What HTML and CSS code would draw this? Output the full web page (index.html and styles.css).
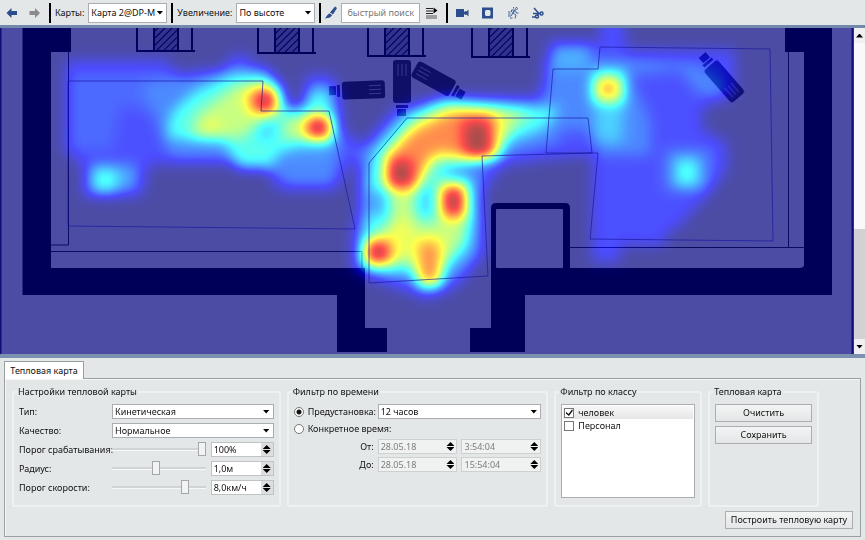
FILE: index.html
```html
<!DOCTYPE html>
<html lang="ru">
<head>
<meta charset="utf-8">
<title>Тепловая карта</title>
<link rel="stylesheet" href="styles.css">
</head>
<body>
<header class="toolbar">
  <button class="tool" type="button" aria-label="Назад"><svg width="12" height="12" viewBox="0 0 12 12"><path fill="#2d4e8c" d="M.5 6 5.500 1v3H11v4H5.500v3z"/></svg></button>
  <button class="tool tool-next" type="button" aria-label="Вперёд"><svg width="12" height="12" viewBox="0 0 12 12"><path fill="#8b8b8b" d="M11 6 6 1v3H.5v4H6v3z"/></svg></button>
  <span class="sep sep-first"></span>
  <label for="map">Карты:</label>
  <span class="combo combo-bar"><select id="map"><option>Карта 2@DP-M</option></select></span>
  <span class="sep"></span>
  <label for="scale">Увеличение:</label>
  <span class="combo combo-bar"><select id="scale"><option>По высоте</option></select></span>
  <span class="sep"></span>
  <button class="tool" type="button" aria-label="Правка"><svg width="12" height="13" viewBox="0 0 12 13"><path fill="#2d4e8c" d="M10 .5 12 2 8 8.500 5 6.500zM4.500 7.200 7.200 9.200 5 11.500 0 12.500 2 9.500z"/></svg></button>
  <input class="search" type="text" placeholder="быстрый поиск" aria-label="быстрый поиск">
  <button class="tool tool-list" type="button" aria-label="Список"><svg width="12" height="12" viewBox="0 0 12 12"><path stroke="#222" d="M0 1.500h7M0 4h7M0 6.500h7"/><path stroke="#555" d="M0 9h11M0 11h11"/><path d="M7.500 .5l4 3-4 3z"/></svg></button>
  <span class="sep"></span>
  <div class="icons">
    <button class="tool" type="button" aria-label="Камера"><svg width="13" height="12" viewBox="0 0 13 12"><path fill="#2d4e8c" d="M0 2h8v3l1.500-1 1 .5 2-2v7l-2-2-1 .5L8 7v3H0z"/></svg></button>
    <button class="tool" type="button" aria-label="Область"><svg width="12" height="12" viewBox="0 0 12 12"><path fill="#2d4e8c" fill-rule="evenodd" d="M0 .5h11v11H0zM4 3 3 4v4l1 1h3.500l1-1V4l-1-1z"/></svg></button>
    <button class="tool" type="button" aria-label="Движение"><svg width="12" height="12" viewBox="0 0 12 12"><g fill="none" stroke="#4565a0"><path d="M4.500 3h4L6 6l3 2-1 3.500M4.500 3v2M6 6 4 9H1M8.500 4l1 2h2M1 5h2.500M1 7h2.500M6.500 1.500V0M3 11h2.500M7 3.500 5 7"/><circle cx="9.500" cy="1.500" r="1"/></g></svg></button>
    <button class="tool" type="button" aria-label="Связи"><svg width="12" height="12" viewBox="0 0 12 12"><g fill="none" stroke="#2d4e8c" stroke-width="1.500"><path d="M2 1l4.500 5M1 6.500h7M5.500 8.500l1-3M0 10h4"/><circle cx="9.500" cy="6.500" r="1.500"/><circle cx="5" cy="9.500" r="1.500"/></g></svg></button>
  </div>
</header>

<main class="viewer">
  <svg class="plan" viewBox="0 28 854 326" preserveAspectRatio="none" role="img" aria-label="План помещения с тепловой картой">
    <defs>
      <pattern id="hatch" width="5" height="5" patternUnits="userSpaceOnUse" patternTransform="rotate(45)">
        <rect width="5" height="5" fill="#a4a4b4"/><path d="M0 0v5" stroke="#000" stroke-width="2"/>
      </pattern>
      <filter id="jet" filterUnits="userSpaceOnUse" x="-40" y="-12" width="934" height="406" color-interpolation-filters="sRGB">
        <feGaussianBlur stdDeviation="7"/>
        <feComponentTransfer>
          <feFuncR type="table" tableValues="0 0 0 0 .5 1 1 1 .5"/>
          <feFuncG type="table" tableValues="0 0 .5 1 1 1 .5 0 0"/>
          <feFuncB type="table" tableValues=".5 1 1 1 .5 0 0 0 0"/>
        </feComponentTransfer>
      </filter>
      <g id="window">
        <path fill="none" stroke="#000" stroke-width="2" d="M1 0v23h58M56 0v24"/>
        <path fill="url(#hatch)" stroke="#000" stroke-width="2" d="M18 -8h24v31H18z"/>
      </g>
      <g id="camera">
        <rect x="-21" y="-9" width="43" height="18" rx="3"/>
        <path d="M-26 -6h3V6h-3zM-34 -5h7v9h-7z"/>
        <path stroke="#aaa" d="M6 -4h12M6 0h12M6 4h12"/>
      </g>
    </defs>
    <rect y="28" width="854" height="326" fill="#fff"/>
    <path d="M22.500 28H71v24H51v216h314v60h22v24h-50v-57H22.500zM785 28h47v267H525v57h-55v-24h21V208q0-5 5-5h69q5 0 5 5v60h229q5 0 5-3V52h-19z"/>
    <rect x="496" y="209" width="67" height="59" rx="1" fill="#fff"/>
    <path fill="none" stroke="#222" d="M68.500 52v193H51M51 251.500h311v17M788.500 52v195M569 247.500h235"/>
    <path fill="none" stroke="#336" d="M.5 28v326M852.500 28v326" stroke-width="2"/>
    <use href="#window" x="136" y="28"/>
    <use href="#window" x="257" y="30"/>
    <use href="#window" x="367" y="33"/>
    <use href="#window" x="471" y="34"/>
    <path stroke="#000" stroke-width="2" d="M368 28v8M423 28v8M472 28v8M527 28v8M313 28v4M258 28v4"/>
    <g opacity=".8">
      <use href="#camera" transform="translate(363 90) rotate(-2)"/>
      <use href="#camera" transform="translate(402 82) rotate(-90)"/>
      <use href="#camera" transform="translate(434 79) rotate(209)"/>
      <use href="#camera" transform="translate(724 81) rotate(49)"/>
    </g>
    <g opacity=".7">
      <g filter="url(#jet)">
        <rect x="-60" y="-30" width="980" height="450" fill="#000"/>
        <path fill="#222" d="M66 60H165L185 80H220L230 55H248L262 76 284 82 290 108H302L306 75H330L340 90L343 130L365 145L395 108L450 96H535L545 80 550 42H600V18H622L628 50H735V95L702 108V130L727 142V170L708 195L680 225L665 235V245H620V262H592V155L545 159L505 165L484 190V255L455 288L428 300L385 284L352 268V235L362 200L358 160L350 165 336 190H278L262 164H150L142 196H82V165L64 150z"/>
        <path fill="#2b2b2b" d="M68 75H180V112H150L120 105 112 150H72z"/>
        <path fill="#363636" d="M140 85L180 75 230 68H268L285 110H300L312 82H332L338 110L342 145L332 185H290L260 160L170 158 160 130zM545 60H600L640 60 700 65 725 85V95L700 95 680 70 630 75L650 120 650 155 600 155L588 130H545zM665 150H710V190H665zM360 150L400 112L560 104V142L482 162V250L460 280L390 280L358 262z"/>
        <path fill="#444" d="M275 125H335V145L325 155H275zM600 90H625V145H595zM120 165H135V190H120zM552 45H590V70H552z"/>
        <path fill="#666" d="M166 138L172 112 194 92 232 74H268L281 92 284 108H306L310 92H328L334 140L300 142L276 155 272 168H238L225 142zM360 262L366 225 366 195 374 152L408 114L440 99L560 108L545 128L505 143L486 160H470L460 168H445L448 178H470L473 225 468 250 445 270 440 288H418L412 272H368zM92 167H118V192H92z"/>
        <path fill="#404040" d="M364 190H386V216H364z"/>
        <path fill="#505050" d="M595 66H625V115H595zM595 110H620V140H595z"/>
        <path fill="#8c8c8c" d="M190 136L198 114 225 94 235 86 272 82 280 105 268 118 240 138H200zM285 118H330V140H285zM370 258L372 245 392 222 390 185 383 155L415 120L450 104L530 112L512 128L498 158L470 160 430 160 418 185 414 212 420 225 440 222 440 182H465L464 238L446 262 438 282H420L410 262z"/>
        <path fill="#9c9c9c" d="M203 120H220V134H203zM236 92L268 85L278 95L275 114L250 112zM304 116H328V140H304zM383 185L386 155L415 124L450 108 510 112 498 155 485 160L445 155L425 165L415 190zM392 220H412L408 260 385 265L365 258V240L385 235zM593 76H623V102H593zM440 185H467V220H440zM412 236H442L440 285H420z"/>
        <path fill="#c8c8c8" d="M250 90H276V112H250zM306 117H331V139H306zM386 160L410 133L450 113H495V157H465L435 152L417 188H388zM365 240H390V264H365zM418 242H440V284H420zM441 187H465V217H441z"/>
        <path fill="#e0e0e0" d="M460 115H492V150H462z"/>
        <path fill="#fff" d="M256 91H275V111H256zM309 117H329V137H309zM389 160H412V188H389zM465 124H490V158H466zM368 243H388V262H368zM444 188H463V214H444z"/>
        <path fill="#666" d="M94 172H112V193H94zM676 159H698V186H676z"/>
        <path fill="#b8b8b8" d="M599 77H618V99H599z"/>
        <path fill="#4c4c4c" d="M258 122H274V138H258zM417 188H432V214H417z"/>
      </g>
    </g>
    <g fill="none" stroke="#1414a0" stroke-opacity=".65">
      <path d="M68 81H263L261 111H329L355 229L68 226z"/>
      <path d="M369 283V163L407 118H588L592 153L482 156L488 276z"/>
      <path d="M600 47L770 49L773 241L590 239L598 153H546L553 69H598z"/>
    </g>
  </svg>
  <div class="scroll">
    <button type="button" class="scroll-up" aria-label="Вверх"></button>
    <div class="scroll-track"><div class="scroll-thumb"></div></div>
    <button type="button" class="scroll-down" aria-label="Вниз"></button>
  </div>
</main>

<section class="dock">
  <div class="tabs"><button type="button" class="tab">Тепловая карта</button></div>
  <div class="page">
    <div class="groups">
      <fieldset>
        <legend>Настройки тепловой карты</legend>
        <div class="settings">
          <label for="type">Тип:</label>
          <span class="combo wide"><select id="type"><option>Кинетическая</option></select></span>
          <label for="quality">Качество:</label>
          <span class="combo wide"><select id="quality"><option>Нормальное</option></select></span>
          <label for="thr">Порог срабатывания:</label>
          <input id="thr" type="range" min="0" max="100" value="100">
          <span class="spin"><input type="text" value="100%" aria-label="Порог срабатывания"><span class="arrows"><button type="button" aria-label="Больше"></button><button type="button" aria-label="Меньше"></button></span></span>
          <label for="rad">Радиус:</label>
          <input id="rad" type="range" min="0" max="100" value="47">
          <span class="spin"><input type="text" value="1,0м" aria-label="Радиус"><span class="arrows"><button type="button" aria-label="Больше"></button><button type="button" aria-label="Меньше"></button></span></span>
          <label for="spd">Порог скорости:</label>
          <input id="spd" type="range" min="0" max="100" value="80">
          <span class="spin"><input type="text" value="8,0км/ч" aria-label="Порог скорости"><span class="arrows"><button type="button" aria-label="Больше"></button><button type="button" aria-label="Меньше"></button></span></span>
        </div>
      </fieldset>
      <fieldset>
        <legend>Фильтр по времени</legend>
        <div class="times">
          <div class="preset">
            <input type="radio" name="period" id="preset" checked><label for="preset">Предустановка:</label>
          </div>
          <span class="combo wide"><select aria-label="Предустановка"><option>12 часов</option></select></span>
          <div class="exact"><input type="radio" name="period" id="exact"><label for="exact">Конкретное время:</label></div>
          <label class="right" for="from">От:</label>
          <span class="spin off"><input id="from" type="text" value="28.05.18" disabled><span class="arrows"><button type="button" disabled aria-label="Больше"></button><button type="button" disabled aria-label="Меньше"></button></span></span>
          <span class="spin off"><input type="text" value="3:54:04" aria-label="Время от" disabled><span class="arrows"><button type="button" disabled aria-label="Больше"></button><button type="button" disabled aria-label="Меньше"></button></span></span>
          <label class="right" for="to">До:</label>
          <span class="spin off"><input id="to" type="text" value="28.05.18" disabled><span class="arrows"><button type="button" disabled aria-label="Больше"></button><button type="button" disabled aria-label="Меньше"></button></span></span>
          <span class="spin off"><input type="text" value="15:54:04" aria-label="Время до" disabled><span class="arrows"><button type="button" disabled aria-label="Больше"></button><button type="button" disabled aria-label="Меньше"></button></span></span>
        </div>
      </fieldset>
      <fieldset>
        <legend>Фильтр по классу</legend>
        <div class="classes">
          <label class="current"><input type="checkbox" checked>человек</label>
          <label><input type="checkbox">Персонал</label>
        </div>
      </fieldset>
      <fieldset>
        <legend>Тепловая карта</legend>
        <div class="actions">
          <button type="button" class="push">Очистить</button>
          <button type="button" class="push">Сохранить</button>
        </div>
      </fieldset>
    </div>
    <div class="footer"><button type="button" class="push build">Построить тепловую карту</button></div>
  </div>
</section>
</body>
</html>
```
FILE: styles.css
```css
* { box-sizing: border-box; }
body {
  margin: 0;
  min-height: 100vh;
  display: flex;
  flex-direction: column;
  background: #e3e7e8;
  color: #111;
  font: 9px/14px "Noto Sans", "Open Sans", sans-serif;
}
button, input, select { font: inherit; color: inherit; margin: 0; padding: 0; border: 0; background: none; border-radius: 0; }
select, input { min-width: 0; }
svg { display: block; }

.toolbar { display: flex; align-items: center; height: 25px; padding-left: 6px; gap: 4px; }
.toolbar label { white-space: nowrap; }
.tool { flex: none; }
.tool-next { margin-left: 7px; }
.tool-list { margin: 0 4px 0 2px; }
.sep { flex: none; width: 2px; height: 20px; background: #000; }
.sep-first { margin-left: 4px; }
.icons { display: flex; align-items: center; gap: 13px; padding-left: 4px; }
.search { width: 79px; height: 20px; padding: 0 5px; border: 1px solid #abadb3; background: #fff; }
.search::placeholder { color: #777; opacity: 1; }

.combo { position: relative; display: block; height: 15px; background: #fff; border: 1px solid #abadb3; }
.combo select { appearance: none; display: block; width: 100%; height: 100%; padding: 0 14px 0 2px; line-height: 13px; white-space: nowrap; }
.combo::after { content: ""; position: absolute; right: 3px; top: calc(50% - 2px); width: 7px; height: 4px; background: #000; clip-path: polygon(0 0, 100% 0, 50% 100%); pointer-events: none; }
.combo-bar { width: 79px; height: 20px; }
.combo-bar select { padding-right: 10px; }

.viewer { display: flex; flex: 1 1 326px; border-top: 3px solid #7289ab; border-bottom: 4px solid #7c91b0; }
.plan { flex: 1; min-width: 0; width: 0; height: auto; background: #4e4ea5; }
.scroll { width: 11px; display: flex; flex-direction: column; background: #f9f9f9; }
.scroll button { height: 15px; background: #f0f0f0; display: grid; place-items: center; }
.scroll button::before { content: ""; width: 7px; height: 4px; background: #000; clip-path: polygon(0 100%, 50% 0, 100% 100%); }
.scroll .scroll-down::before { clip-path: polygon(0 0, 100% 0, 50% 100%); }
.scroll-track { flex: 1; display: flex; flex-direction: column; justify-content: flex-end; }
.scroll-thumb { height: 37%; background: #d2d2d2; }

.dock { padding: 3px 4px 4px; }
.tabs { display: flex; }
.tab { position: relative; height: 18px; width: 80px; margin-bottom: -1px; background: #fff; border: 1px solid #9a9fa2; border-bottom: 0; }
.page { border: 1px solid #9a9fa2; padding: 6px 7px 7px; box-shadow: inset 1px 1px #f4f6f6; }
.groups { display: grid; grid-template-columns: 269fr 262fr 148fr 111fr; gap: 6px; padding-right: 34px; }
fieldset { min-width: 0; margin: 0; padding: 5px 5px 7px; border: 2px solid #eef1f1; border-radius: 3px; }
legend { padding: 0 1px; margin-left: -2px; line-height: 14px; }
label { white-space: nowrap; }
.settings { display: grid; grid-template-columns: 93px 1fr 63px; gap: 4px 0; align-items: center; }
.wide { grid-column: span 2; }
.settings input[type=range] { appearance: none; width: calc(100% - 5px); height: 15px; }
input[type=range]::-webkit-slider-runnable-track { height: 3px; background: #d0d4d5; border-bottom: 1px solid #f7f8f8; }
input[type=range]::-webkit-slider-thumb { appearance: none; width: 8px; height: 14px; margin-top: -6px; background: #f2f3f3; border: 1px solid #a4a7a9; }
.spin { display: flex; height: 15px; border: 1px solid #c0c3c5; background: #fff; }
.spin input { flex: 1; width: 0; padding-left: 2px; }
.arrows { width: 12px; background: #dcdedf; display: flex; flex-direction: column; align-items: center; justify-content: center; gap: 1px; }
.arrows button { width: 8px; height: 4px; background: #000; clip-path: polygon(0 100%, 50% 0, 100% 100%); }
.arrows button:last-child { clip-path: polygon(0 0, 100% 0, 50% 100%); }
.off { background: #f0f1f1; border-color: #cdd0d1; color: #7d7d7d; }
.off .arrows { background: none; }
.times { display: grid; grid-template-columns: 80px 1fr 1fr; gap: 3px 4px; align-items: center; }
.preset, .exact { display: flex; align-items: center; gap: 4px; }
.exact { grid-column: 1 / -1; }
.right { text-align: right; }
input[type=radio] { appearance: none; flex: none; width: 10px; height: 10px; border: 1px solid #777; border-radius: 50%; background: #fff; }
input[type=radio]:checked { background: radial-gradient(circle, #111 0 2px, #fff 3px); }
.classes { height: 94px; border: 1px solid #abadb3; background: #fff; padding: 1px; }
.classes label { display: flex; align-items: center; gap: 4px; height: 13px; padding-left: 1px; }
.classes .current { background: linear-gradient(#f7f7f7, #e6e6e6); }
input[type=checkbox] { appearance: none; flex: none; width: 10px; height: 10px; border: 1px solid #777; background: #fff; display: grid; place-items: center; }
input[type=checkbox]:checked::before { content: ""; width: 7px; height: 7px; background: #111; clip-path: polygon(0 40%, 40% 70%, 90% 5%, 100% 25%, 45% 100%, 0 65%); }
.actions { display: flex; flex-direction: column; gap: 4px; }
.push { height: 18px; border: 1px solid #abadb3; background: linear-gradient(#f3f4f4, #e4e6e7); white-space: nowrap; }
.footer { display: flex; justify-content: flex-end; padding-top: 4px; }
.build { width: 128px; }
```
